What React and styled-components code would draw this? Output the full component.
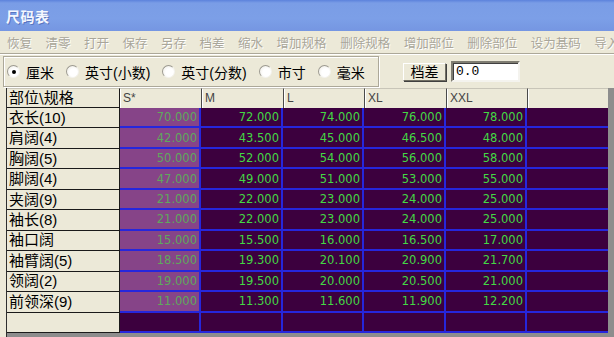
import React from "react";
import styled, { createGlobalStyle } from "styled-components";

const GlobalStyle = createGlobalStyle`
  html, body {
    margin: 0;
    padding: 0;
    background: #ece9d8;
  }
  * { box-sizing: border-box; }
`;

const cjk = `"Liberation Sans", "Noto Sans CJK SC", sans-serif`;

// reverse solidus built from its char code
const BACKSLASH = String.fromCharCode(92);

const Window = styled.div`
  width: 614px;
  height: 337px;
  overflow: hidden;
  background: #ece9d8;
  display: flex;
  flex-direction: column;
  font-family: ${cjk};
`;

const TitleBar = styled.div`
  height: 31px;
  flex: none;
  display: flex;
  align-items: center;
  padding-left: 6px;
  background: linear-gradient(#5c82dc 0px, #7a9de6 3px, #7c9fe7 60%, #7596e2 100%);
`;

const Title = styled.span`
  color: #f4f7ff;
  font-size: 14px;
  font-weight: bold;
  letter-spacing: 0.5px;
  text-shadow: 1px 1px 0 #5a76c0;
`;

const Toolbar = styled.div`
  height: 22px;
  flex: none;
  display: flex;
  align-items: center;
  gap: 13.5px;
  padding-left: 7px;
  white-space: nowrap;
  overflow: hidden;
`;

const ToolItem = styled.span`
  font-size: 12.5px;
  color: #a9a69a;
  text-shadow: 1px 1px 0 #ffffff;
`;

const Separator = styled.div`
  height: 2px;
  flex: none;
  border-top: 1px solid #aca899;
  border-bottom: 1px solid #ffffff;
`;

const OptionsRow = styled.div`
  height: 33px;
  flex: none;
  display: flex;
  align-items: center;
  padding-left: 3px;
`;

const GroupBox = styled.div`
  width: 376px;
  height: 31px;
  display: flex;
  align-items: center;
  gap: 12px;
  padding-left: 3px;
  border: 1px solid #aca899;
  box-shadow: inset 1px 1px 0 #fff, 1px 1px 0 #fff;
`;

const Radio = styled.label`
  display: flex;
  align-items: center;
  gap: 6px;
  font-size: 14px;
  color: #000;
`;

const RadioMark = styled.span`
  width: 13px;
  height: 13px;
  border-radius: 50%;
  border: 1px solid;
  border-color: #9c9a90 #f4f3ee #f4f3ee #9c9a90;
  background: radial-gradient(circle at 60% 60%, #ffffff 40%, #ebe9e0 100%);
  display: flex;
  align-items: center;
  justify-content: center;

  &::after {
    content: "";
    width: 4px;
    height: 4px;
    border-radius: 50%;
    background: ${(p) => (p.$checked ? "#000" : "transparent")};
  }
`;

const PushButton = styled.button`
  margin-left: 24px;
  width: 43px;
  height: 18px;
  padding: 0;
  font-family: ${cjk};
  font-size: 14px;
  line-height: 14px;
  color: #000;
  background: #ece9d8;
  border: 1px solid;
  border-color: #ffffff #716f64 #716f64 #ffffff;
  box-shadow: 1px 1px 0 #404040;
`;

const TextInput = styled.div`
  margin-left: 5px;
  width: 69px;
  height: 21px;
  background: #fff;
  border: 2px solid;
  border-color: #7f7d72 #f4f3ee #f4f3ee #7f7d72;
  box-shadow: inset 1px 1px 0 #404040;
  font-family: "Liberation Mono", monospace;
  font-size: 13px;
  line-height: 17px;
  padding-left: 3px;
  color: #000;
`;

const GridArea = styled.div`
  flex: 1;
  min-height: 0;
  display: flex;
  padding-left: 6px;
`;

const GridFrame = styled.div`
  flex: 1;
  border-left: 1px solid #2e2e2e;
  background: #8d8d8d;
  overflow: hidden;
`;

const SizeGrid = styled.div`
  width: 601px;
  height: 245px;
  display: grid;
  grid-template-columns: 113px 81px 82px 81px 82px 81px 81px;
  grid-template-rows: 20px repeat(11, minmax(0, 1fr));
  background: #3c003e;
`;

const CornerCell = styled.div`
  background: #ece9d8;
  border-top: 1px solid #c8c5b8;
  border-right: 1px solid #1a1a1a;
  border-bottom: 1px solid #1a1a1a;
  font-size: 15px;
  line-height: 18px;
  padding-left: 2px;
  color: #000;
  white-space: nowrap;
`;

const Slash = styled.span`
  font-family: "DejaVu Sans", sans-serif;
  font-size: 14px;
`;

const HeadCell = styled.div`
  background: #ece9d8;
  border-top: 1px solid #c8c5b8;
  border-left: ${(p) => (p.$first ? "none" : "1px solid #4a4a4a")};
  box-shadow: inset 1px 0 0 #fff;
  font-family: "Liberation Sans", sans-serif;
  font-size: 12px;
  line-height: 18px;
  padding-left: 3px;
  color: #444;
`;

const RowHead = styled.div`
  background: #ece9d8;
  border-right: 1px solid #1a1a1a;
  border-bottom: 1px solid #1a1a1a;
  font-size: 15px;
  line-height: 18px;
  display: flex;
  align-items: center;
  padding-left: 2px;
  color: #000;
  white-space: nowrap;
  overflow: hidden;
  min-height: 0;
`;

const DataCell = styled.div`
  background: ${(p) => (p.$base ? "#864488" : "#3c003e")};
  color: ${(p) => (p.$base ? "#5fa85d" : "#44d844")};
  border-bottom: 2px solid #2626dc;
  border-right: ${(p) => (p.$last ? "none" : "2px solid #2626dc")};
  font-family: "DejaVu Sans", sans-serif;
  font-size: 11.5px;
  line-height: 14px;
  display: flex;
  align-items: center;
  justify-content: flex-end;
  padding-right: 2px;
  min-height: 0;
  overflow: hidden;
`;

const tools = [
  "恢复", "清零", "打开", "保存", "另存", "档差", "缩水",
  "增加规格", "删除规格", "增加部位", "删除部位", "设为基码", "导入",
];

const units = [
  { label: "厘米", checked: true },
  { label: "英寸(小数)" },
  { label: "英寸(分数)" },
  { label: "市寸" },
  { label: "毫米" },
];

const sizes = ["S*", "M", "L", "XL", "XXL", ""];

const rows = [
  ["衣长(10)", 70.0, 72.0, 74.0, 76.0, 78.0],
  ["肩阔(4)", 42.0, 43.5, 45.0, 46.5, 48.0],
  ["胸阔(5)", 50.0, 52.0, 54.0, 56.0, 58.0],
  ["脚阔(4)", 47.0, 49.0, 51.0, 53.0, 55.0],
  ["夹阔(9)", 21.0, 22.0, 23.0, 24.0, 25.0],
  ["袖长(8)", 21.0, 22.0, 23.0, 24.0, 25.0],
  ["袖口阔", 15.0, 15.5, 16.0, 16.5, 17.0],
  ["袖臂阔(5)", 18.5, 19.3, 20.1, 20.9, 21.7],
  ["领阔(2)", 19.0, 19.5, 20.0, 20.5, 21.0],
  ["前领深(9)", 11.0, 11.3, 11.6, 11.9, 12.2],
  ["", null, null, null, null, null],
];

export default function App() {
  return (
    <>
      <GlobalStyle />
      <Window>
        <TitleBar>
          <Title>尺码表</Title>
        </TitleBar>
        <Toolbar>
          {tools.map((t) => (
            <ToolItem key={t}>{t}</ToolItem>
          ))}
        </Toolbar>
        <Separator />
        <OptionsRow>
          <GroupBox>
            {units.map((u) => (
              <Radio key={u.label}>
                <RadioMark $checked={u.checked} />
                {u.label}
              </Radio>
            ))}
          </GroupBox>
          <PushButton>档差</PushButton>
          <TextInput>0.0</TextInput>
        </OptionsRow>
        <GridArea>
          <GridFrame>
            <SizeGrid>
              <CornerCell>
                部位<Slash>{BACKSLASH}</Slash>规格
              </CornerCell>
              {sizes.map((s, i) => (
                <HeadCell key={i} $first={i === 0}>{s}</HeadCell>
              ))}
              {rows.map(([name, ...vals], r) => (
                <React.Fragment key={r}>
                  <RowHead>{name}</RowHead>
                  {vals.map((v, c) => (
                    <DataCell key={c} $base={c === 0 && v !== null}>
                      {v !== null ? v.toFixed(3) : ""}
                    </DataCell>
                  ))}
                  <DataCell $last />
                </React.Fragment>
              ))}
            </SizeGrid>
          </GridFrame>
        </GridArea>
      </Window>
    </>
  );
}
